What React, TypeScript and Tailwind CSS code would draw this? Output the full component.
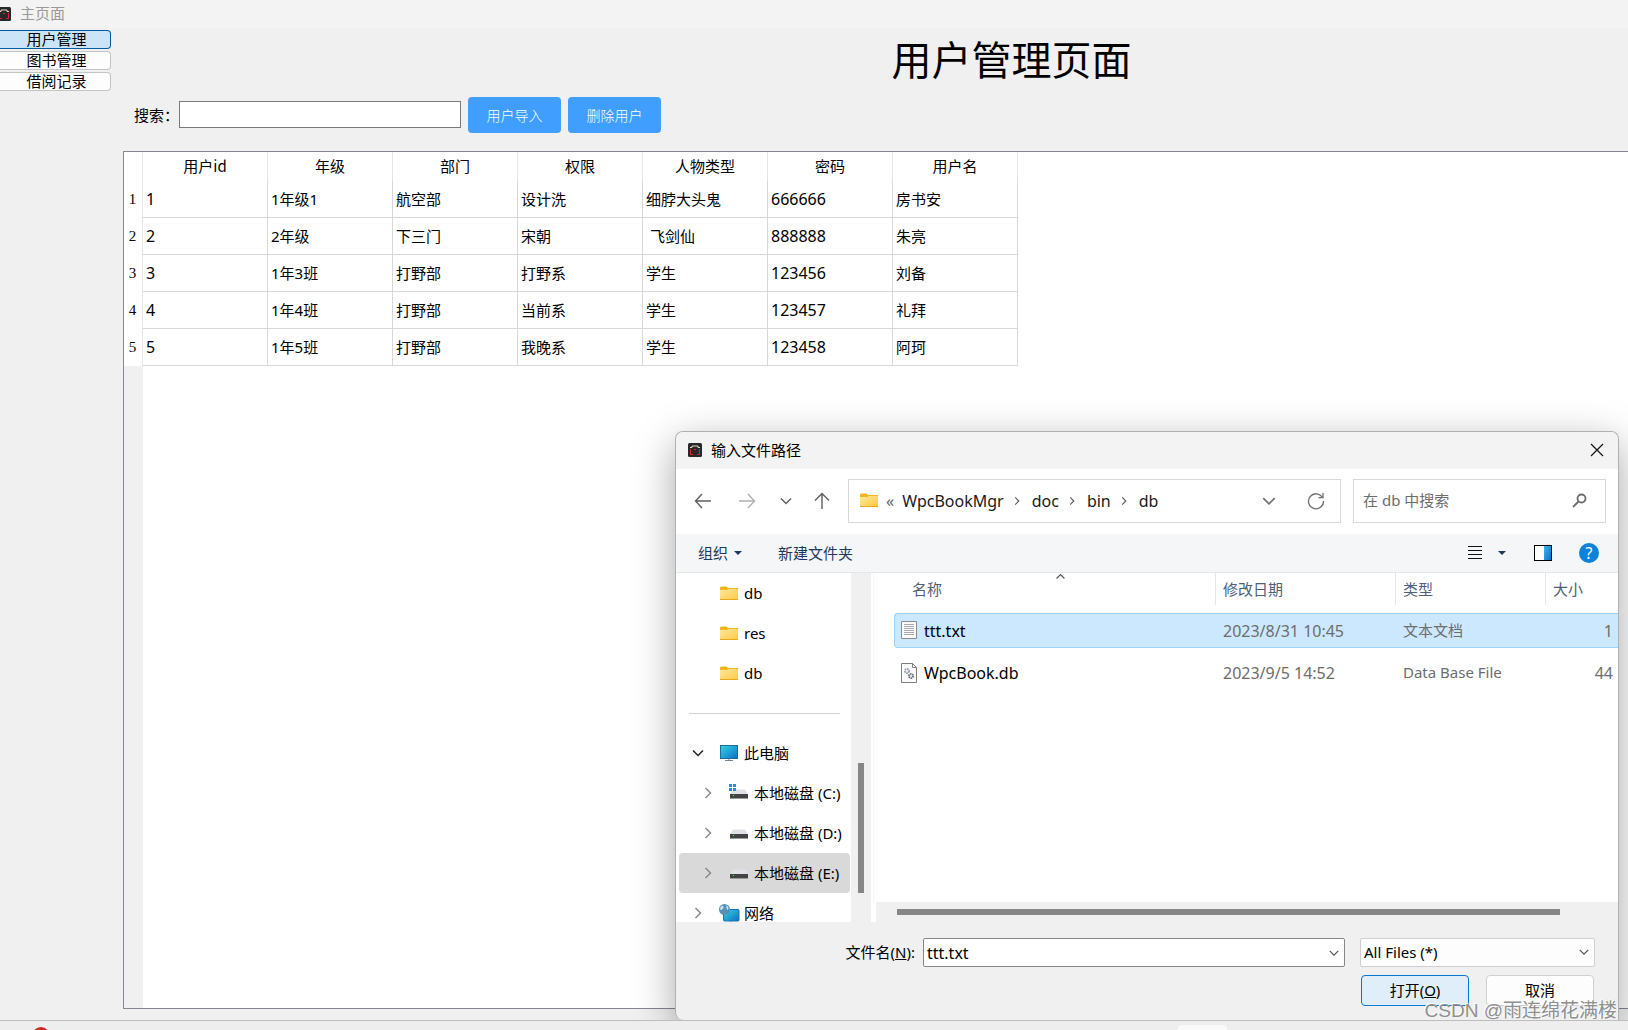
import type { ReactNode } from "react";

const uiFont = "font-['Noto_Sans','Noto_Sans_CJK_SC',sans-serif]";
const formFont = "font-['Noto_Sans_CJK_SC',sans-serif]";

const menu = ["用户管理", "图书管理", "借阅记录"];

const columns = ["用户id", "年级", "部门", "权限", "人物类型", "密码", "用户名"];

const users = [
  ["1", "1年级1", "航空部", "设计洗", "细脖大头鬼", "666666", "房书安"],
  ["2", "2年级", "下三门", "宋朝", " 飞剑仙", "888888", "朱亮"],
  ["3", "1年3班", "打野部", "打野系", "学生", "123456", "刘备"],
  ["4", "1年4班", "打野部", "当前系", "学生", "123457", "礼拜"],
  ["5", "1年5班", "打野部", "我晚系", "学生", "123458", "阿珂"],
];

const files = [
  { name: "ttt.txt", date: "2023/8/31 10:45", type: "文本文档", size: "1", icon: <TextFileIcon />, selected: true },
  { name: "WpcBook.db", date: "2023/9/5 14:52", type: "Data Base File", size: "44", icon: <DbFileIcon />, selected: false },
];

function AppIcon() {
  return (
    <svg width="14" height="14" viewBox="0 0 14 14" className="shrink-0">
      <rect width="14" height="14" rx="1.500" fill="#26282b" />
      <path d="M2 4.500h2v-1.500h6v1.500h2" fill="none" stroke="#e8dcc0" />
      <path d="M2.500 6v5.500h2.500M11.500 6v5.500H9M6 6.500h2" fill="none" stroke="#d8262f" />
    </svg>
  );
}

function FolderIcon() {
  return (
    <svg width="18" height="15" viewBox="0 0 18 15" className="shrink-0">
      <defs>
        <linearGradient id="folder" x1="0" y1="0" x2="1" y2="1">
          <stop offset="0" stopColor="#ffe9a0" />
          <stop offset="1" stopColor="#ffc83a" />
        </linearGradient>
      </defs>
      <path d="M0 1.500 1 .5h5.500L8 2h10v4H0z" fill="#f5b31c" />
      <path d="M0 4h7l1.500-1H18v11H0z" fill="url(#folder)" />
      <path d="M0 13.500h18" stroke="#e8a81e" />
    </svg>
  );
}

function DriveIcon({ system = false }: { system?: boolean }) {
  return (
    <svg width="20" height="18" viewBox="0 0 20 18" className="shrink-0">
      <path d="M4 5.500h12l3 5H1z" fill="#dfe1e4" />
      <rect x="1" y="10" width="18" height="5" fill="#434343" />
      <path d="M1 14.500h18" stroke="#9a9a9a" />
      <rect x="4" y="11" width="1" height="1" fill="#39ff3d" />
      {system && (
        <path d="M0 0h3v3H0zM4 0h3v3H4zM0 4h3v3H0zM4 4h3v3H4z" fill="#1a93dc" />
      )}
    </svg>
  );
}

function ComputerIcon() {
  return (
    <svg width="18" height="17" viewBox="0 0 18 17" className="shrink-0">
      <defs>
        <linearGradient id="screen" x1="0" y1="0" x2="1" y2="1">
          <stop offset="0" stopColor="#33d3e0" />
          <stop offset="1" stopColor="#0f6fc8" />
        </linearGradient>
      </defs>
      <rect x=".5" y=".5" width="17" height="13" fill="url(#screen)" stroke="#1c6f93" />
      <path d="M9 14v1.500M5 15.500h8" stroke="#73828c" />
    </svg>
  );
}

function NetworkIcon() {
  return (
    <svg width="21" height="19" viewBox="0 0 21 19" className="shrink-0">
      <rect x="4.500" y="5.500" width="15.500" height="11.500" rx="1" fill="url(#screen)" stroke="#1776ae" />
      <path d="M12 17v2" stroke="#73828c" />
      <circle cx="5.500" cy="5.500" r="5.500" fill="#5590b5" />
      <path d="M1.500 3C3 1 5 1.500 4.500 4L2.500 6 1 5.500zM7 1.500c2 .5 2.500 2 2.500 3.500L8 6z" fill="#c8e4f2" />
    </svg>
  );
}

function TextFileIcon() {
  return (
    <svg width="16" height="20" viewBox="0 0 16 20" className="shrink-0">
      <path d="M.5.500h15v17H.5z" fill="#fafafa" stroke="#8c8c8c" />
      <path d="M3 3.500h10M3 5.500h10M3 7.500h10M3 9.500h10M3 11.500h10M3 13.500h10" stroke="#a9a9a9" />
    </svg>
  );
}

function DbFileIcon() {
  return (
    <svg width="16" height="20" viewBox="0 0 16 20" className="shrink-0">
      <path d="M.5.5h11l4 4v15H.5z" fill="#fbfbfb" stroke="#7d7d7d" />
      <path d="M11.500.5v4h4" fill="none" stroke="#7d7d7d" />
      <circle cx="6" cy="8" r="2" fill="none" stroke="#98a3b3" strokeWidth="2" strokeDasharray="1.500 .6" />
      <circle cx="10" cy="13" r="2" fill="none" stroke="#626a75" strokeWidth="2" strokeDasharray="1.300 .6" />
    </svg>
  );
}

function Chevron({ dir, className, size = 14 }: { dir: "down" | "right" | "up"; className: string; size?: number }) {
  const d = { down: "M2 4.500 7 9.500 12 4.500", right: "M4.500 2 9.500 7 4.500 12", up: "M2 9.500 7 4.500 12 9.500" }[dir];
  return (
    <svg width={size} height={size} viewBox="0 0 14 14" className={className} fill="none" stroke="currentColor" strokeWidth="1.500">
      <path d={d} />
    </svg>
  );
}

function Caret() {
  return (
    <svg width="8" height="4" viewBox="0 0 8 4">
      <path d="M0 0h8L4 4z" fill="#1e395b" />
    </svg>
  );
}

function NavButton({ label, children }: { label: string; children: ReactNode }) {
  return (
    <button aria-label={label} className="flex h-8 items-center justify-center text-[#606060]">
      {children}
    </button>
  );
}

function TreeItem({ icon, label, level = 0, arrow, selected }: { icon: ReactNode; label: string; level?: number; arrow?: "down" | "right"; selected?: boolean }) {
  return (
    <li className={selected ? "rounded-sm bg-[#d9d9d9]" : ""}>
      <a href="#" className={`flex h-10 items-center whitespace-nowrap text-black ${level ? "pl-[22px]" : "pl-3"}`}>
        <span className="w-[14px]">
          {arrow && <Chevron dir={arrow} className={arrow === "down" ? "text-[#222]" : "text-[#8a8a8a]"} />}
        </span>
        <span className="ml-[13px] flex w-[22px] justify-center">{icon}</span>
        <span className="ml-1">{label}</span>
      </a>
    </li>
  );
}

function FileDialog() {
  return (
    <section
      aria-label="输入文件路径"
      className={`${uiFont} absolute right-[9px] bottom-0 flex h-[589px] w-[944px] flex-col overflow-hidden rounded-t-lg rounded-bl-lg border border-b-0 border-[#b0b0b0] bg-[#f0f0f0] text-[15px] shadow-[0_12px_40px_rgba(0,0,0,0.35)]`}
    >
      <header className="flex h-[37px] shrink-0 items-center bg-[#f3f3f3] pr-[14px] pb-px pl-3">
        <AppIcon />
        <h2 className="ml-[9px] flex-1">输入文件路径</h2>
        <button aria-label="关闭">
          <svg width="14" height="14" viewBox="0 0 14 14" stroke="#111" strokeWidth="1.200">
            <path d="M1 1l12 12M13 1 1 13" />
          </svg>
        </button>
      </header>

      <div className="flex h-[65px] shrink-0 items-center bg-white pr-3 pb-[2px] pl-[18px]">
        <NavButton label="后退">
          <svg width="18" height="16" viewBox="0 0 18 16" fill="none" stroke="currentColor" strokeWidth="1.400">
            <path d="M17 8H1.500M8 1 1.500 8 8 15" />
          </svg>
        </NavButton>
        <span className="ml-[26px] opacity-50">
          <NavButton label="前进">
            <svg width="18" height="16" viewBox="0 0 18 16" fill="none" stroke="currentColor" strokeWidth="1.400">
              <path d="M1 8h15.500M10 1l6.500 7-6.500 7" />
            </svg>
          </NavButton>
        </span>
        <span className="ml-[23px]">
          <NavButton label="最近的位置">
            <Chevron dir="down" className="" />
          </NavButton>
        </span>
        <span className="ml-[21px]">
          <NavButton label="上移">
            <svg width="16" height="18" viewBox="0 0 16 18" fill="none" stroke="currentColor" strokeWidth="1.400">
              <path d="M8 17V1.500M1 8.500l7-7 7 7" />
            </svg>
          </NavButton>
        </span>

        <nav className="ml-[18px] flex h-11 flex-1 items-center border border-[#d9d9d9] px-[11px] text-base text-[#1a1a1a]">
          <FolderIcon />
          <span className="mx-2 text-[#606060]">«</span>
          <a href="#">WpcBookMgr</a>
          <Chevron dir="right" size={10} className="mr-[10px] ml-2 text-[#555]" />
          <a href="#">doc</a>
          <Chevron dir="right" size={10} className="mr-[10px] ml-2 text-[#555]" />
          <a href="#">bin</a>
          <Chevron dir="right" size={10} className="mr-[10px] ml-2 text-[#555]" />
          <a href="#" className="flex-1">db</a>
          <button aria-label="展开">
            <Chevron dir="down" size={16} className="text-[#707070]" />
          </button>
          <button aria-label="刷新" className="mr-1 ml-[30px]">
            <svg width="18" height="18" viewBox="0 0 18 18" fill="none" stroke="#707070" strokeWidth="1.300">
              <path d="M15.500 5.500A7.500 7.500 0 1 0 16.500 9M16 1v4.700h-4.500" />
            </svg>
          </button>
        </nav>

        <label className="ml-3 flex h-11 w-[253px] items-center border border-[#d9d9d9] pr-[18px] pl-[9px]">
          <input type="text" aria-label="搜索" placeholder="在 db 中搜索" className="min-w-0 flex-1 outline-none placeholder:text-[#6d6d6d]" />
          <svg width="15" height="15" viewBox="0 0 15 15" fill="none" stroke="#6d6d6d">
            <circle cx="9.500" cy="5.500" r="4" strokeWidth="1.800" />
            <path d="M6.500 8.500 1 14" strokeWidth="1.800" />
          </svg>
        </label>
      </div>

      <div className="flex h-[39px] shrink-0 items-center border-b border-[#e3e7ea] bg-[#f4f6f8] pr-[19px] pl-[22px] text-[#1e395b]">
        <button className="flex items-center gap-[6px]">
          组织
          <Caret />
        </button>
        <button className="ml-9">新建文件夹</button>
        <button aria-label="视图" className="ml-auto">
          <svg width="14" height="14" viewBox="0 0 14 14" stroke="#111">
            <path d="M0 .5h14M0 4.500h14M0 8.500h14M0 12.500h14" />
          </svg>
        </button>
        <button aria-label="更多选项" className="ml-4">
          <Caret />
        </button>
        <button aria-label="预览窗格" className="ml-7">
          <svg width="18" height="16" viewBox="0 0 18 16">
            <defs>
              <linearGradient id="pane" x1="0" y1="0" x2="1" y2="1">
                <stop offset="0" stopColor="#38b6ee" />
                <stop offset="1" stopColor="#0a74cf" />
              </linearGradient>
            </defs>
            <rect x=".5" y=".5" width="17" height="15" fill="#fff" stroke="#000" />
            <rect x="10" y="1" width="7" height="14" fill="url(#pane)" />
          </svg>
        </button>
        <button aria-label="帮助" className="ml-[27px] flex size-5 items-center justify-center rounded-full bg-[#0c83d8] text-base leading-5 text-white">
          ?
        </button>
      </div>

      <div className="flex h-[349px] shrink-0">
        <nav className="w-[175px] shrink-0 overflow-hidden bg-white pr-px pl-[3px]">
          <ul>
            <TreeItem icon={<FolderIcon />} label="db" />
            <TreeItem icon={<FolderIcon />} label="res" />
            <TreeItem icon={<FolderIcon />} label="db" />
            <li className="flex h-10 items-center pr-[10px] pl-[10px]">
              <span className="h-px flex-1 bg-[#d2d2d2]" />
            </li>
            <TreeItem icon={<ComputerIcon />} label="此电脑" arrow="down" />
            <TreeItem icon={<DriveIcon system />} label="本地磁盘 (C:)" level={1} arrow="right" />
            <TreeItem icon={<DriveIcon />} label="本地磁盘 (D:)" level={1} arrow="right" />
            <TreeItem icon={<DriveIcon />} label="本地磁盘 (E:)" level={1} arrow="right" selected />
            <TreeItem icon={<NetworkIcon />} label="网络" arrow="right" />
          </ul>
        </nav>
        <div className="flex w-5 shrink-0 justify-center pt-[190px]">
          <div className="h-[130px] w-[6px] bg-[#868686]" />
        </div>

        <div className="flex min-w-0 flex-1 flex-col border-l-2 border-white bg-white">
          <div className="flex-1 border-l border-[#f7f7f7] pl-5">
            <table className="w-full table-fixed border-separate border-spacing-0 text-left whitespace-nowrap">
              <colgroup>
                <col />
                <col className="w-[180px]" />
                <col className="w-[150px]" />
                <col className="w-[72px]" />
              </colgroup>
              <thead className="text-[#4c607a]">
                <tr className="h-8">
                  <th className="relative border-r border-[#e5e5e5] pl-[18px] font-normal">
                    名称
                    <Chevron dir="up" size={11} className="absolute -top-[2px] left-[161px] text-[#555]" />
                  </th>
                  <th className="border-r border-[#e5e5e5] pl-[7px] font-normal">修改日期</th>
                  <th className="border-r border-[#e5e5e5] pl-[7px] font-normal">类型</th>
                  <th className="pl-[7px] font-normal">大小</th>
                </tr>
              </thead>
              <tbody className="text-[#6d6d6d]">
                <tr className="h-2">
                  <td colSpan={4} />
                </tr>
                {files.map((file) => {
                  const cell = file.selected ? "border-y border-[#99d1ff] bg-[#cce8ff] h-[35px]" : "h-[49px]";
                  return (
                    <tr key={file.name}>
                      <td className={`${cell} ${file.selected ? "rounded-l-sm border-l pl-[6px]" : "pl-[7px]"}`}>
                        <span className="flex items-center gap-[7px] text-base text-black">
                          {file.icon}
                          {file.name}
                        </span>
                      </td>
                      <td className={`${cell} pl-[7px] text-base`}>{file.date}</td>
                      <td className={`${cell} pl-[7px]`}>{file.type}</td>
                      <td className={`${cell} pr-[5px] text-right text-base`}>{file.size}</td>
                    </tr>
                  );
                })}
              </tbody>
            </table>
          </div>
          <div className="ml-[3px] flex h-5 items-center bg-[#f0f0f0] pr-[58px] pl-[21px]">
            <div className="mb-[7px] h-[6px] flex-1 self-end bg-[#868686]" />
          </div>
        </div>
      </div>

      <footer className="flex flex-col gap-2 pt-4 pr-[23px]">
        <div className="flex items-center justify-end">
          <label htmlFor="filename">
            文件名(<u>N</u>):
          </label>
          <span className="ml-2 flex h-[29px] w-[422px] items-center rounded-xs border border-[#868686] bg-white pr-1 pl-[3px]">
            <input id="filename" type="text" defaultValue="ttt.txt" className="min-w-0 flex-1 text-base outline-none" />
            <button aria-label="历史文件名">
              <Chevron dir="down" size={12} className="text-[#555]" />
            </button>
          </span>
          <span className="relative ml-[15px]">
            <select aria-label="文件类型" className="block h-[29px] w-[235px] appearance-none rounded-xs border border-[#cfcfcf] bg-[#fdfdfd] pl-[3px]">
              <option>All Files (*)</option>
            </select>
            <Chevron dir="down" size={12} className="pointer-events-none absolute top-2 right-[5px] text-[#555]" />
          </span>
        </div>
        <div className="flex justify-end gap-[17px] pr-px">
          <button className="h-[31px] w-[108px] rounded-sm border border-[#0078d4] bg-[#e0eef9]">
            打开(<u>O</u>)
          </button>
          <button className="h-[31px] w-[108px] rounded-sm border border-[#d0d0d0] bg-[#fdfdfd]">取消</button>
        </div>
      </footer>
    </section>
  );
}

export default function App() {
  return (
    <div className={`${formFont} flex h-screen flex-col overflow-hidden bg-[#f0f0f0] text-[15px] text-black`}>
      <div className="relative flex min-h-0 flex-1 flex-col overflow-hidden">
        <header className="flex h-7 shrink-0 items-center bg-[#f3f3f3] pb-px">
          <span className="-ml-[3px]">
            <AppIcon />
          </span>
          <span className="ml-[9px] text-[#999]">主页面</span>
        </header>

        <div className="flex min-h-0 flex-1">
          <nav className="flex w-[111px] shrink-0 flex-col gap-[2px] pt-[2px]">
            {menu.map((item, i) => (
              <button
                key={item}
                className={`h-[19px] rounded-r border border-l-0 pb-px pl-[3px] leading-4 ${
                  i === 0 ? "border-[#005a9e] bg-[#cce4f7]" : "border-[#c4c4c4] bg-[#fdfdfd]"
                }`}
              >
                {item}
              </button>
            ))}
          </nav>

          <main className="ml-3 flex min-w-0 flex-1 flex-col pb-[11px]">
            <h1 className="pl-[272px] text-center text-[40px] leading-[60px]">用户管理页面</h1>
            <div className="mt-[9px] flex items-start pl-[11px]">
              <label htmlFor="search" className="w-[45px] leading-9 whitespace-nowrap">
                搜索：
              </label>
              <input id="search" type="text" className="mt-1 h-[27px] w-[282px] border border-[#7a7a7a] bg-white px-1 outline-none" />
              <button className="ml-[7px] h-9 w-[93px] rounded bg-[#409eff] pb-px text-sm font-light text-white">用户导入</button>
              <button className="ml-[7px] h-9 w-[93px] rounded bg-[#409eff] pb-px text-sm font-light text-white">删除用户</button>
            </div>

            <div className="mt-[18px] flex min-h-0 flex-1 flex-col border border-r-0 border-[#828790] bg-white">
              <table className="w-[894px] table-fixed border-separate border-spacing-0 whitespace-pre">
                <colgroup>
                  <col className="w-[19px]" />
                </colgroup>
                <thead>
                  <tr className="h-[29px]">
                    <td className="border-r border-[#e5e5e5]" />
                    {columns.map((name) => (
                      <th key={name} className="border-r border-[#e5e5e5] font-normal">
                        {name}
                      </th>
                    ))}
                  </tr>
                </thead>
                <tbody className={uiFont}>
                  {users.map((row) => (
                    <tr key={row[0]} className="h-[37px]">
                      <th className="border-r border-[#e5e5e5] pr-px font-['Liberation_Serif',serif] font-normal">{row[0]}</th>
                      {row.map((value, i) => (
                        <td key={i} className={`border-r border-b border-[#d8d8d8] pl-[3px] ${/^\d+$/.test(value) ? "text-base" : ""}`}>
                          {value}
                        </td>
                      ))}
                    </tr>
                  ))}
                </tbody>
              </table>
              <div className="w-[19px] flex-1 bg-[#f0f0f0]" />
            </div>
          </main>
        </div>

        <FileDialog />
      </div>

      <footer className="flex h-[10px] shrink-0 items-end justify-between overflow-hidden border-t border-[#bdbdbd] bg-[#eee] pr-[401px] pl-[34px]">
        <svg width="14" height="3" viewBox="0 0 14 3">
          <circle cx="7" cy="9" r="9" fill="#c42b2b" />
        </svg>
        <span className="h-[5px] w-[49px] rounded-t bg-[#f9f9f9]" />
      </footer>

      <p className="pointer-events-none absolute right-[11px] bottom-[7px] font-['Liberation_Sans','Noto_Sans_CJK_SC',sans-serif] text-[19px] leading-6 whitespace-nowrap text-[#8f8f8f] [text-shadow:-1px_-1px_0_#fff]">
        CSDN @雨连绵花满楼
      </p>
    </div>
  );
}
